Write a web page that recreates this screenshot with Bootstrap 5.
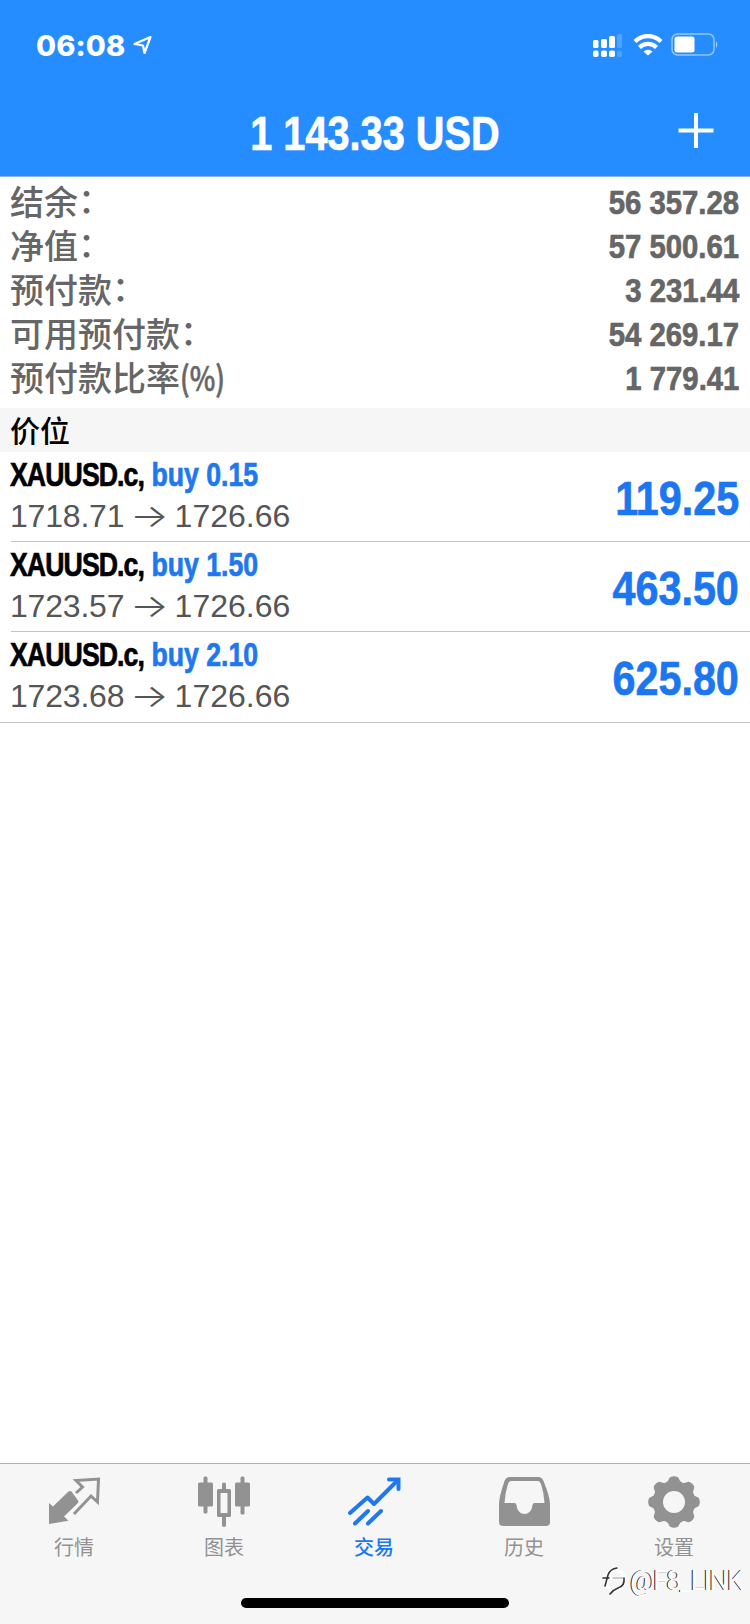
<!DOCTYPE html>
<html lang="zh-CN">
<head>
<meta charset="utf-8">
<meta name="viewport" content="width=device-width, initial-scale=1">
<title>交易</title>
<link href="https://cdn.jsdelivr.net/npm/bootstrap@5.3.0/dist/css/bootstrap.min.css" rel="stylesheet">
<style>
body{font-family:"Liberation Sans","Noto Sans CJK SC",sans-serif;background:#fff;color:#000;overflow:hidden}
.screen{width:750px;height:1624px}
.topbar{height:177px;background:#258dff;border-bottom:1px solid #8fb4e4;color:#fff}
.status{height:90px;padding:0 31px 0 36px}
.clock{font:800 29px/1 Inter,sans-serif;letter-spacing:.1px}
/* condensed bold face: regular width bold squeezed horizontally */
.narrow{display:inline-block;font-family:"Liberation Sans",sans-serif;font-weight:700;-webkit-text-stroke:.7px currentColor;white-space:nowrap}
.title-row{height:86px}
.total{font-size:49px;line-height:86px;transform:scaleX(.81)}
.plus{right:35px;top:22px}
.summary{padding:3px 11px 8px 10px}
.sum-row{height:44px;color:#666}
.sum-label{font:500 34px/42px "Noto Sans CJK SC",sans-serif}
.colon{vertical-align:2px;line-height:0}
.unit{display:inline-block;transform:scaleX(.8);transform-origin:0 50%;-webkit-text-stroke:.6px currentColor}
.sum-value{font-size:33.5px;line-height:46px;transform:scaleX(.875);transform-origin:100% 50%}
.section{height:44px;background:#f6f6f6;padding-left:10px;font:500 30px/42px "Noto Sans CJK SC",sans-serif}
.trade{height:90px;margin-left:11px;padding-right:11px;border-bottom:1px solid #c4c4c4}
.trade:last-child{margin-left:0;padding-left:11px;height:91px}
.symbol{display:block;font-size:32.5px;line-height:40px;margin:3px 0 1px -1px;transform:scaleX(.82);transform-origin:0 50%}
.pair{letter-spacing:-1.1px}
.price{font-size:32px;line-height:40px;color:#555;margin-left:-1px}
.open{letter-spacing:-.2px}
.arrow{display:inline-block;font-family:Inter,sans-serif;font-weight:300;transform:scaleX(1.27);margin:0 1px}
.side{color:#2078ee}
.profit{font-size:48px;line-height:56px;margin-top:4px;color:#1c76f0;transform:scaleX(.86);transform-origin:100% 50%}
.tabs{height:161px;background:#f6f6f6;border-top:1px solid #b2b2b2}
.tab{font:400 20px/28px "Noto Sans CJK SC",sans-serif;color:#929292;padding:11px 2px 0 0}
.tab svg{margin-bottom:4px}
.tab.on{color:#2078ee;font-weight:500}
.home{width:268px;height:10px;left:241px;bottom:16px;background:#000}
.stamp{left:602px;bottom:24px;color:#fff;font:400 27.5px/38px Roboto,sans-serif;letter-spacing:-1.8px;text-shadow:-1px 0 0 #222;gap:3px}
</style>
</head>
<body>
<main class="screen d-flex flex-column position-relative">
<header class="topbar flex-shrink-0">
 <div class="status d-flex align-items-center justify-content-between">
  <div class="d-flex align-items-center gap-2"><span class="clock">06:08</span>
   <svg width="20" height="20" viewBox="0 0 20 20" fill="none" stroke="#fff" stroke-width="2.2" stroke-linejoin="round"><path d="M17.500 2 1.500 9l8.500 1.500L11.500 18z"/></svg></div>
  <svg width="127" height="26" viewBox="0 0 127 26" fill="#fff">
   <rect x="1" y="8" width="5.500" height="8" rx="1.500"/><rect x="9" y="7" width="6" height="9" rx="1.500"/><rect x="17" y="4" width="6" height="12" rx="1.500"/><rect x="25" y="2" width="5" height="14" rx="1.500" opacity=".2"/>
   <rect x="1" y="18.500" width="5.500" height="6.500" rx="1.800"/><rect x="9" y="18.500" width="6" height="6.500" rx="1.800"/><rect x="17" y="18.500" width="6" height="6.500" rx="1.800"/><rect x="25" y="18.500" width="5" height="6.500" rx="1.800" opacity=".2"/>
   <g fill="none" stroke="#fff" stroke-width="4.200"><path d="M43 9.500a18.500 18.500 0 0 1 26 0M47.500 15.500a12 12 0 0 1 17 0"/></g><path d="M51.500 19.500a7 7 0 0 1 9 0L56 23.500z"/>
   <rect x="80" y="2" width="42" height="21" rx="5.500" fill="none" stroke="#fff" stroke-width="1.500" opacity=".5"/><rect x="82.500" y="4.500" width="20" height="16" rx="2.500"/><path d="M124 9q2.500 3.500 0 7z" opacity=".6"/>
  </svg>
 </div>
 <div class="title-row position-relative text-center">
  <span class="total narrow">1 143.33 USD</span>
  <svg class="plus position-absolute" width="38" height="38" viewBox="0 0 38 38" stroke="#fff" stroke-width="4"><path d="M1.500 18.500h35M19 1v35"/></svg>
 </div>
</header>
<section class="summary flex-shrink-0">
 <div class="sum-row d-flex justify-content-between"><span class="sum-label">结余<span class="colon">：</span></span><span class="sum-value narrow">56 357.28</span></div>
 <div class="sum-row d-flex justify-content-between"><span class="sum-label">净值<span class="colon">：</span></span><span class="sum-value narrow">57 500.61</span></div>
 <div class="sum-row d-flex justify-content-between"><span class="sum-label">预付款<span class="colon">：</span></span><span class="sum-value narrow">3 231.44</span></div>
 <div class="sum-row d-flex justify-content-between"><span class="sum-label">可用预付款<span class="colon">：</span></span><span class="sum-value narrow">54 269.17</span></div>
 <div class="sum-row d-flex justify-content-between"><span class="sum-label">预付款比率<span class="unit">(%)</span></span><span class="sum-value narrow">1 779.41</span></div>
</section>
<div class="section flex-shrink-0">价位</div>
<section class="flex-grow-1">
 <div class="trade d-flex justify-content-between align-items-center"><div class="align-self-start"><div class="symbol narrow"><span class="pair">XAUUSD.c,</span> <span class="side">buy 0.15</span></div><div class="price"><span class="open">1718.71</span> <span class="arrow">→</span> 1726.66</div></div><span class="profit narrow">119.25</span></div>
 <div class="trade d-flex justify-content-between align-items-center"><div class="align-self-start"><div class="symbol narrow"><span class="pair">XAUUSD.c,</span> <span class="side">buy 1.50</span></div><div class="price"><span class="open">1723.57</span> <span class="arrow">→</span> 1726.66</div></div><span class="profit narrow">463.50</span></div>
 <div class="trade d-flex justify-content-between align-items-center"><div class="align-self-start"><div class="symbol narrow"><span class="pair">XAUUSD.c,</span> <span class="side">buy 2.10</span></div><div class="price"><span class="open">1723.68</span> <span class="arrow">→</span> 1726.66</div></div><span class="profit narrow">625.80</span></div>
</section>
<nav class="tabs d-flex flex-shrink-0">
 <div class="tab col text-center"><svg class="d-block mx-auto" width="54" height="54" viewBox="0 0 54 54"><path fill="#929292" d="M2 28l4 3.500L21.500 16.500q1.500-1 3 0l6.500 9q.8 1.500 0 2.500L17 41.500l4.500 4.200L2 49z"/><path fill="none" stroke="#929292" stroke-width="3" d="M29 18 35.500 12l-6.500-6.500L51.500 4 50.500 27l-6.500-6L27 39"/></svg>行情</div>
 <div class="tab col text-center"><svg class="d-block mx-auto" width="54" height="54" viewBox="0 0 54 54" fill="#929292"><rect x="1" y="7.500" width="15" height="24" rx="1.500"/><rect x="6.500" y="1.500" width="4" height="37" rx="1.500"/><rect x="38" y="7.500" width="15" height="24" rx="1.500"/><rect x="43.500" y="1.500" width="4" height="38" rx="1.500"/><path fill-rule="evenodd" d="M25 9q0-1.500 2-1.500T29 9v5h3.500q1.500 0 1.500 1.500v25q0 1.500-1.500 1.500H29v8q0 2-2 2t-2-2v-8h-3.500q-1.500 0-1.500-1.500v-25q0-1.500 1.500-1.500H25zM23.500 18v20h7V18z"/></svg>图表</div>
 <div class="tab on col text-center"><svg class="d-block mx-auto" width="54" height="54" viewBox="0 0 54 54" fill="none" stroke="#2078ee" stroke-width="4" stroke-linecap="round" stroke-linejoin="round"><path d="M3 38 20.500 22.500l6.500 6.500L50 6M8 48.500l13-12.500M21 48.500l13-12.500"/><path d="M42 4.500h9.500v9.500" stroke-linejoin="miter"/></svg>交易</div>
 <div class="tab col text-center"><svg class="d-block mx-auto" width="54" height="54" viewBox="0 0 54 54"><path fill="#929292" fill-rule="evenodd" d="M13 2h28q4 0 5.500 4Q53 22 53 29v18q0 4-4 4H6q-4 0-4-4V29q0-7 5.500-23Q9 2 13 2zm1 4q-2 0-3 3Q8 18 7.500 28h10q1.500 0 2 2c1 12 15 12 16 0q.5-2 2-2h10Q47 18 44 9q-1-3-3-3z"/></svg>历史</div>
 <div class="tab col text-center"><svg class="d-block mx-auto" width="54" height="54" viewBox="-27 -27 54 54"><g fill="#929292"><g id="t"><path id="a" d="M-8.200-19.500Q-6-20-5-23-4.200-25.800 0-25.800T5-23Q6-20 8.200-19.500L8.200 19.500Q6 20 5 23 4.200 25.800 0 25.800T-5 23Q-6 20-8.200 19.500z"/><use href="#a" transform="rotate(90)"/></g><use href="#t" transform="rotate(45)"/></g><circle r="11" fill="#f6f6f6"/></svg>设置</div>
</nav>
<div class="home position-absolute rounded-pill"></div>
<div class="stamp position-absolute d-flex align-items-center"><svg width="25" height="30" viewBox="0 0 25 30" fill="none" stroke-linecap="round"><circle cx="13" cy="14" r="10" stroke="#fff" stroke-width="3"/><path stroke="#fff" stroke-width="3" d="M4 20 8 6q2-4 7-4M2 12h20"/><path stroke="#333" stroke-width="1.600" d="M3 20 6 9q2-6 9-7M1 12h6M22 12q1 8-6 10-5 2-8 6"/><path stroke="#999" d="M11 12h10"/></svg><span>@F8_LINK</span></div>
</main>
<script src="https://cdn.jsdelivr.net/npm/bootstrap@5.3.0/dist/js/bootstrap.bundle.min.js"></script>
</body>
</html>
